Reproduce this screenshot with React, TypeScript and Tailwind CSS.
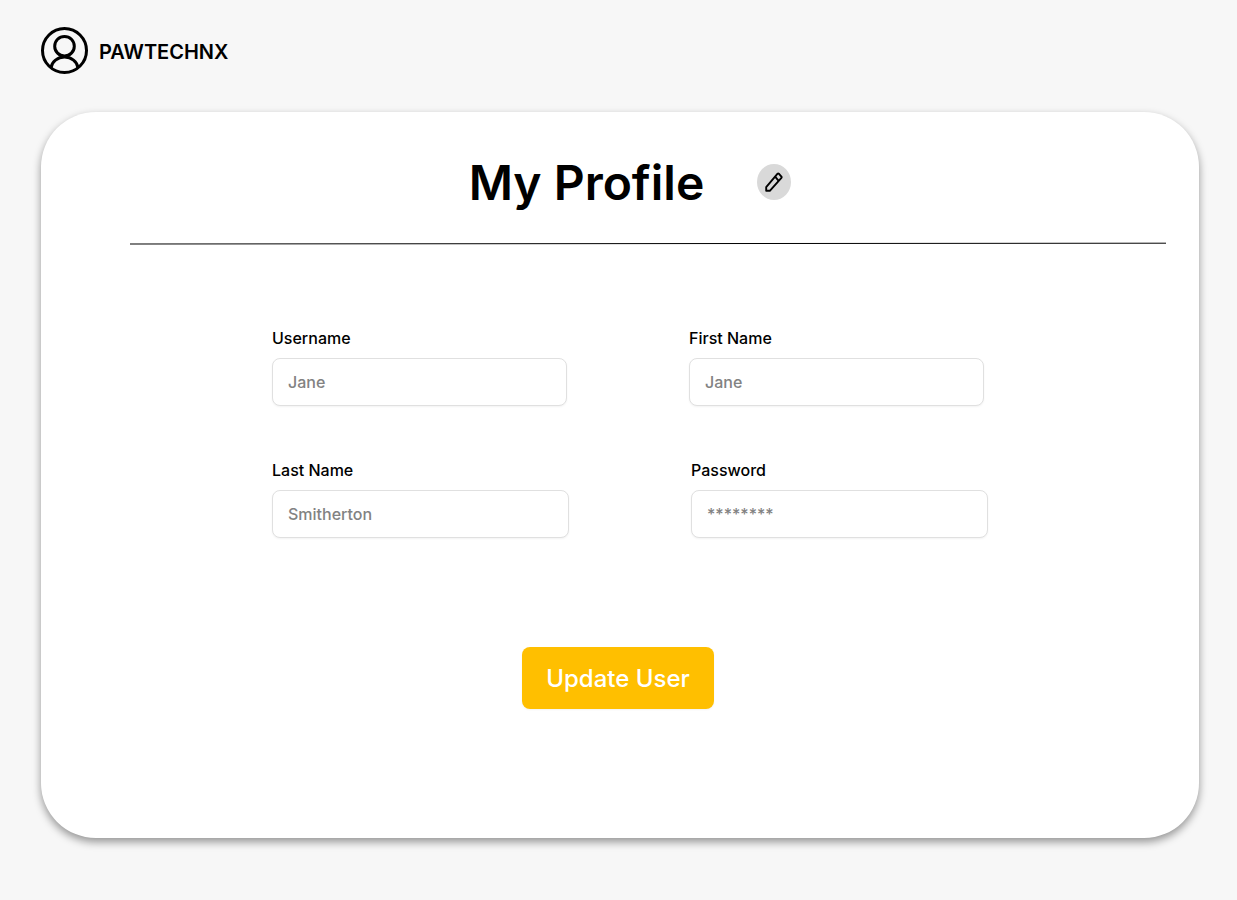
import React from "react";

type FieldProps = {
  id: string;
  label: string;
  placeholder: string;
  type?: string;
};

function Field({ id, label, placeholder, type = "text" }: FieldProps) {
  return (
    <div className="flex min-w-0 flex-1 flex-col gap-2">
      <label htmlFor={id} className="text-base font-medium text-black">
        {label}
      </label>
      <input
        id={id}
        type={type}
        placeholder={placeholder}
        className="h-12 w-full rounded-lg border border-[#e0e0e0] bg-white px-[15px] text-base font-medium text-black shadow-[0_1px_2px_rgba(0,0,0,0.05)] placeholder:text-[#828282]"
      />
    </div>
  );
}

function UserCircle() {
  return (
    <svg viewBox="0 0 47 47" fill="none" stroke="#000" strokeWidth="3" className="size-[47px]" aria-hidden="true">
      <circle cx="23.5" cy="23.5" r="22" />
      <circle cx="23.5" cy="19.2" r="9.8" />
      <path d="M10 40.8A13.6 12.2 0 0 1 37 40.8" />
    </svg>
  );
}

function Pencil() {
  return (
    <svg viewBox="0 0 18 20" fill="none" stroke="#000" strokeWidth="1.9" strokeLinejoin="round" className="h-5 w-[18px]" aria-hidden="true">
      <path d="M1.2 18.8V15.1L12.6 1.7Q13.2 1.1 13.8 1.7L16.4 4.7Q16.9 5.3 16.4 5.9L4.8 18.8Z" />
      <path d="M10.1 4.6L13.7 8.8" />
    </svg>
  );
}

export default function App() {
  return (
    <div className="min-h-screen bg-[#f7f7f7] pt-[27px] pr-[38px] pb-[62px] pl-[41px] font-['Inter',sans-serif] text-black">
      <header className="flex items-center gap-[11px]">
        <UserCircle />
        <span className="pt-0.5 text-xl font-semibold">PAWTECHNX</span>
      </header>

      <main className="mt-[38px] rounded-[55px] bg-white pt-10 pb-[129px] shadow-[0_4px_8px_rgba(0,0,0,0.4)]">
        <div className="flex items-start justify-center gap-[53px] pl-5">
          <h1 className="text-5xl leading-[62px] font-semibold">My Profile</h1>
          <button
            type="button"
            aria-label="Edit profile"
            className="mt-3 flex h-9 w-[34px] items-center justify-center rounded-[50%] bg-[#d9d9d9]"
          >
            <Pencil />
          </button>
        </div>

        <div className="mt-7 pr-[33px] pl-[89px]">
          <svg viewBox="0 0 1036 3" preserveAspectRatio="none" className="h-[3px] w-full" aria-hidden="true">
            <path d="M0 2L1036 1.2" stroke="#000" strokeWidth="1" />
          </svg>
        </div>

        <form onSubmit={(event) => event.preventDefault()}>
          <div className="mt-[81px] flex flex-col gap-[52px] pr-[211px] pl-[231px]">
            <div className="flex gap-[122px] pr-1">
              <Field id="username" label="Username" placeholder="Jane" />
              <Field id="first-name" label="First Name" placeholder="Jane" />
            </div>
            <div className="flex gap-[122px]">
              <Field id="last-name" label="Last Name" placeholder="Smitherton" />
              <Field id="password" label="Password" placeholder="********" type="password" />
            </div>
          </div>

          <div className="mt-[109px] flex justify-center pr-1">
            <button
              type="submit"
              className="rounded-lg bg-[#ffbf00] px-6 pt-3.5 pb-3 text-2xl leading-9 font-medium text-white shadow-[0_1px_2px_rgba(0,0,0,0.05)]"
            >
              Update User
            </button>
          </div>
        </form>
      </main>
    </div>
  );
}
